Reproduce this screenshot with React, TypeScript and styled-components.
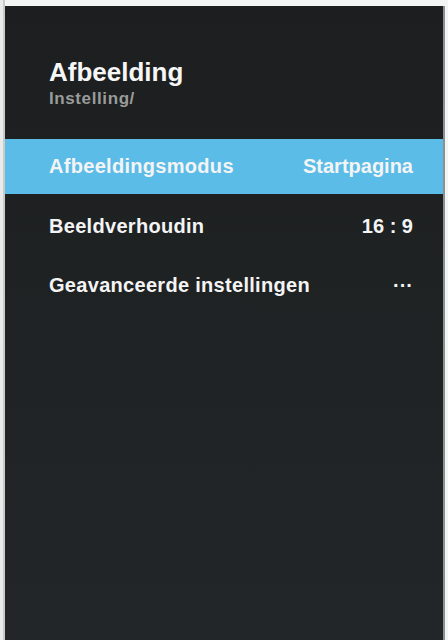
import React from "react";
import styled, { createGlobalStyle } from "styled-components";

const Global = createGlobalStyle`
  html, body {
    margin: 0;
    padding: 0;
    background: #f3f4f4;
  }
  body {
    font-family: "Liberation Sans", Arial, Helvetica, sans-serif;
  }
`;

const Frame = styled.div`
  width: 448px;
  height: 640px;
  box-sizing: border-box;
  padding: 6px 3px 0 5px;
  display: flex;
  background: linear-gradient(to right, #e9eaea 0, #e9eaea 3px, #c9cbcb 3px, #c9cbcb 5px, #f3f4f4 5px);
`;

const Panel = styled.div`
  flex: 1;
  display: flex;
  flex-direction: column;
  background: linear-gradient(to bottom, #1c1e1f 0%, #1f2223 40%, #222628 100%);
  border-right: 2px solid #8d9091;
  padding-top: 51px;
`;

const Header = styled.header`
  display: flex;
  flex-direction: column;
  padding-left: 44px;
`;

const Title = styled.h1`
  margin: 0;
  font-size: 26px;
  line-height: 30px;
  font-weight: 700;
  color: #f6f6f6;
`;

const Breadcrumb = styled.div`
  margin-top: 2px;
  font-size: 17px;
  line-height: 20px;
  font-weight: 700;
  letter-spacing: 0.6px;
  color: #9a9b9b;
`;

const List = styled.ul`
  list-style: none;
  margin: 30px 0 0;
  padding: 0;
  display: flex;
  flex-direction: column;
  gap: 4.5px;
`;

const Row = styled.li<{ $active?: boolean }>`
  height: 55px;
  display: flex;
  align-items: center;
  justify-content: space-between;
  padding: 0 30px 0 44px;
  background: ${(p) => (p.$active ? "#5bbce8" : "transparent")};
  font-size: 20px;
  font-weight: 700;
  letter-spacing: 0.3px;
  color: #f4f4f4;
`;

const Value = styled.span`
  letter-spacing: 0;
`;

const items = [
  { label: "Afbeeldingsmodus", value: "Startpagina", active: true },
  { label: "Beeldverhoudin", value: "16 : 9" },
  { label: "Geavanceerde instellingen", value: "\u00b7\u00b7\u00b7" },
];

export default function App() {
  return (
    <>
      <Global />
      <Frame>
        <Panel>
          <Header>
            <Title>Afbeelding</Title>
            <Breadcrumb>Instelling/</Breadcrumb>
          </Header>
          <List>
            {items.map((it) => (
              <Row key={it.label} $active={it.active}>
                <span>{it.label}</span>
                <Value>{it.value}</Value>
              </Row>
            ))}
          </List>
        </Panel>
      </Frame>
    </>
  );
}
